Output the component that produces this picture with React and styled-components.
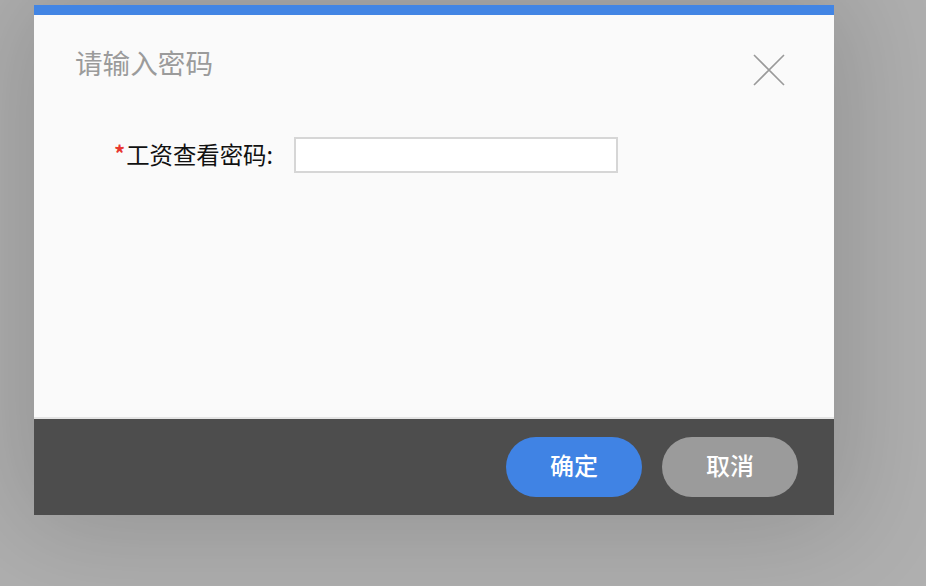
import React from "react";
import styled, { createGlobalStyle } from "styled-components";

const Global = createGlobalStyle`
  html, body { margin: 0; padding: 0; }
  body {
    width: 926px;
    height: 586px;
    overflow: hidden;
    background: #b0b0b0;
    font-family: "Noto Sans CJK SC", "Noto Sans", sans-serif;
  }
`;

const Stage = styled.div`
  display: flex;
  align-items: flex-start;
  padding: 5px 0 0 34px;
`;

const Dialog = styled.div`
  width: 800px;
  display: flex;
  flex-direction: column;
  border-top: 10px solid #4285e4;
  background: #fafafa;
  box-shadow: 0 0 110px 20px rgba(0, 0, 0, 0.16);
`;

const Body = styled.div`
  height: 404px;
  box-sizing: border-box;
  display: flex;
  flex-direction: column;
  border-bottom: 2px solid #e4e4e4;
`;

const Header = styled.div`
  display: flex;
  align-items: flex-start;
  justify-content: space-between;
  padding: 27px 49px 0 41px;
  height: 43px;
`;

const Title = styled.h2`
  margin: 0;
  font-size: 27.6px;
  font-weight: 400;
  line-height: 40px;
  color: #9b9b9b;
`;

const CloseButton = styled.button`
  width: 32px;
  height: 32px;
  padding: 0;
  margin-top: 12px;
  border: none;
  background: transparent;
  display: flex;
  align-items: center;
  justify-content: center;
  cursor: pointer;
`;

const FormRow = styled.div`
  display: flex;
  align-items: center;
  gap: 21px;
  padding: 52px 0 0 80px;
`;

const Label = styled.label`
  font-size: 23.4px;
  line-height: 36px;
  height: 36px;
  padding-bottom: 3px;
  box-sizing: border-box;
  color: #111111;
  display: flex;
  align-items: center;
`;

const Required = styled.span`
  color: #e8372f;
  font-size: 22px;
  font-weight: 700;
  margin-right: 1px;
  position: relative;
  top: -2px;
`;

const Input = styled.input`
  width: 324px;
  height: 36px;
  box-sizing: border-box;
  border: 2px solid #d6d6d6;
  background: #ffffff;
  outline: none;
  padding: 0 8px;
  font-size: 16px;
`;

const Footer = styled.div`
  height: 96px;
  background: #4d4d4d;
  display: flex;
  align-items: center;
  justify-content: flex-end;
  gap: 20px;
  padding-right: 36px;
`;

const PillButton = styled.button`
  width: 136px;
  height: 60px;
  border: none;
  border-radius: 30px;
  background: ${(p) => (p.$primary ? "#4083e4" : "#9b9b9b")};
  color: #ffffff;
  font-family: "Noto Sans CJK SC", "Noto Sans", sans-serif;
  font-size: 24px;
  font-weight: 500;
  line-height: 1;
  cursor: pointer;
  padding: 0 0 5px;
`;

export default function App() {
  return (
    <>
      <Global />
      <Stage>
        <Dialog>
          <Body>
            <Header>
              <Title>请输入密码</Title>
              <CloseButton aria-label="关闭">
                <svg width="32" height="32" viewBox="0 0 32 32">
                  <path d="M1 1 L31 31 M31 1 L1 31" stroke="#9a9a9a" strokeWidth="1.6" fill="none" />
                </svg>
              </CloseButton>
            </Header>
            <FormRow>
              <Label>
                <Required>*</Required>工资查看密码:
              </Label>
              <Input type="password" />
            </FormRow>
          </Body>
          <Footer>
            <PillButton $primary>确定</PillButton>
            <PillButton>取消</PillButton>
          </Footer>
        </Dialog>
      </Stage>
    </>
  );
}
